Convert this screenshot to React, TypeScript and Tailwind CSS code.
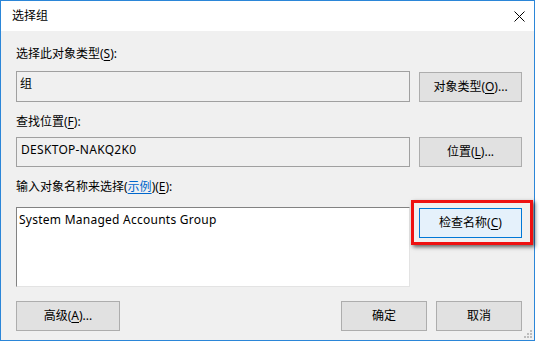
import React from "react";

const font = { fontFamily: '"Noto Sans", "Noto Sans CJK SC", sans-serif' };

function U({ c }: { c: string }) {
  return <span className="underline underline-offset-2">{c}</span>;
}

function Btn({ children, w, h = "h-[30px]" }: { children: React.ReactNode; w: string; h?: string }) {
  return (
    <div className={`${w} ${h} flex items-center justify-center border border-[#adadad] bg-[#e1e1e1] text-[12px] text-black`}>
      {children}
    </div>
  );
}

export default function App() {
  return (
    <div className="w-[539px] h-[346px] bg-white" style={font}>
      <div className="relative w-[535px] h-[341px] border border-[#2b86d8] flex flex-col bg-[#f0f0f0]">
        {/* title bar */}
        <div className="h-[30px] bg-white flex items-center justify-between pl-[11px] pr-[8px] shrink-0">
          <span className="text-[12px] text-black leading-none">选择组</span>
          <svg width="11" height="11" viewBox="0 0 11 11" className="mr-[1px]">
            <path d="M0.5 0.5 L10.5 10.5 M10.5 0.5 L0.5 10.5" stroke="#000" strokeWidth="1" />
          </svg>
        </div>
        {/* body */}
        <div className="flex flex-col pl-[15px] pr-[12px] text-[12px] text-black">
          <div className="mt-[15px] h-[16px] leading-[16px]">
            选择此对象类型(<U c="S" />):
          </div>
          <div className="mt-[9px] flex gap-[9px] items-center">
            <div className="w-[394px] h-[31px] border border-[#a0a0a0] bg-[#f0f0f0] pl-[3px] pt-[4px] leading-[16px]">组</div>
            <Btn w="w-[103px]" h="h-[30px]">
              对象类型(<U c="O" />)...
            </Btn>
          </div>
          <div className="mt-[12px] h-[16px] leading-[16px]">
            查找位置(<U c="F" />):
          </div>
          <div className="mt-[7px] flex gap-[9px] items-center">
            <div className="w-[394px] h-[30px] border border-[#a0a0a0] bg-[#f0f0f0] pl-[4px] pt-[4px] leading-[16px] tracking-[0.3px]">DESKTOP-NAKQ2K0</div>
            <Btn w="w-[103px]" h="h-[30px]">
              位置(<U c="L" />)...
            </Btn>
          </div>
          <div className="mt-[12px] h-[16px] leading-[16px]">
            输入对象名称来选择(<span className="text-[#0066cc] underline underline-offset-2">示例</span>)(<U c="E" />):
          </div>
          <div className="mt-[12px] flex gap-[9px] items-start">
            <div className="w-[394px] h-[80px] bg-white border-t border-l border-[#828282] border-r border-b border-r-[#e3e3e3] border-b-[#e3e3e3] pl-[2px] pt-[4px] leading-[16px] tracking-[0.25px]">
              System Managed Accounts Group
            </div>
            <div className="relative mt-[1px]">
              <div className="w-[103px] h-[30px] flex items-center justify-center border border-[#0078d7] bg-[#e5f1fb]">
                检查名称(<U c="C" />)
              </div>
              <div className="absolute left-[-8px] top-[-8px] w-[122px] h-[45px] border-[3px] border-[#ee1111] shadow-[2px_2px_4px_rgba(0,0,0,0.6)]" />
            </div>
          </div>
          <div className="mt-[14px] flex items-center">
            <Btn w="w-[104px]" h="h-[30px]">
              高级(<U c="A" />)...
            </Btn>
            <div className="flex-1" />
            <Btn w="w-[86px]" h="h-[30px]">确定</Btn>
            <div className="w-[9px]" />
            <Btn w="w-[86px]" h="h-[30px]">取消</Btn>
          </div>
        </div>
        <svg className="absolute right-[1px] bottom-[1px]" width="9" height="9" viewBox="0 0 9 9">
          <rect x="6" y="0" width="2" height="2" fill="#bdbdbd" />
          <rect x="3" y="3" width="2" height="2" fill="#bdbdbd" />
          <rect x="6" y="3" width="2" height="2" fill="#bdbdbd" />
          <rect x="0" y="6" width="2" height="2" fill="#bdbdbd" />
          <rect x="3" y="6" width="2" height="2" fill="#bdbdbd" />
          <rect x="6" y="6" width="2" height="2" fill="#bdbdbd" />
        </svg>
      </div>
    </div>
  );
}
